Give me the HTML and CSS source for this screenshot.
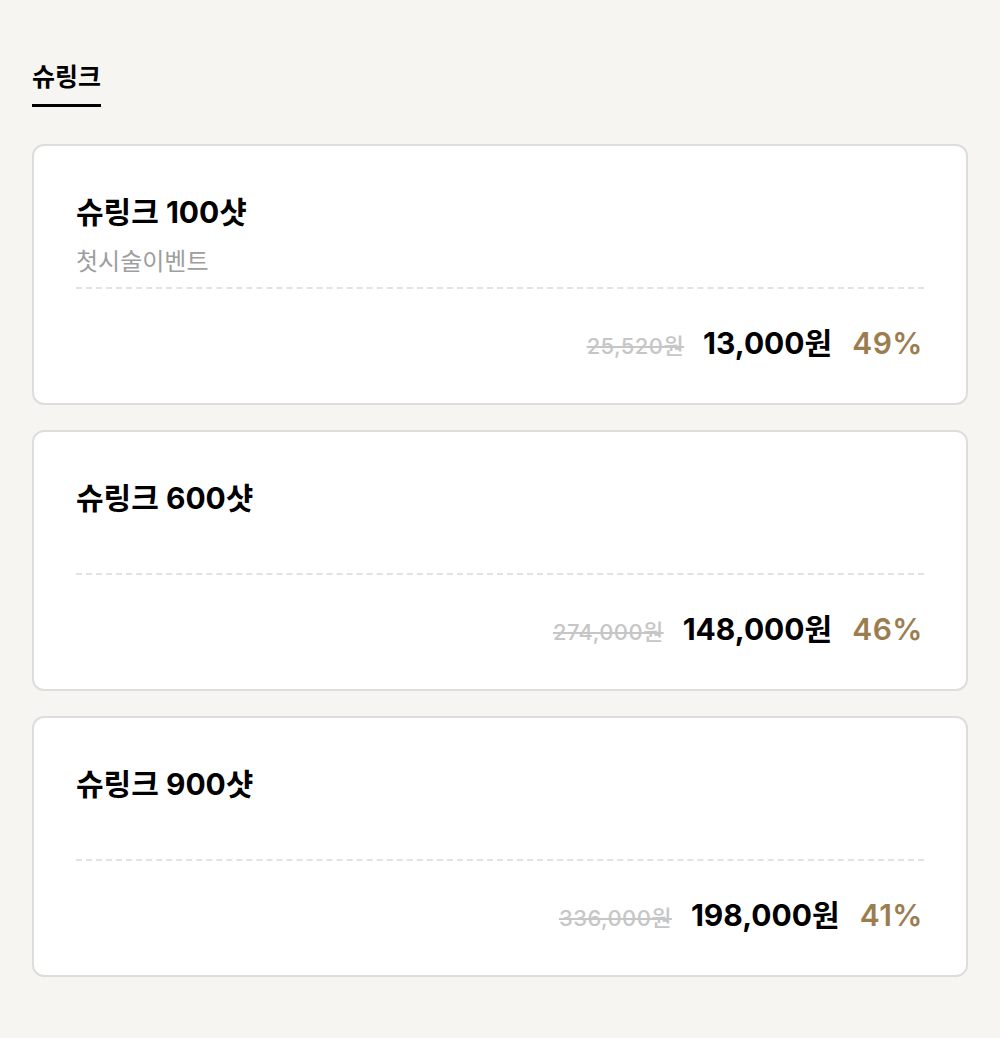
FILE: index.html
```html
<!DOCTYPE html>
<html lang="ko">
<head>
  <meta charset="UTF-8">
  <meta name="viewport" content="width=device-width, initial-scale=1.0">
  <title>슈링크</title>
  <link rel="stylesheet" href="styles.css">
</head>
<body>
  <div class="page">
    <div class="tabs">
      <span class="tab active">슈링크</span>
    </div>

    <div class="card-list">
      <div class="card">
        <h2 class="card-title">슈링크 100샷</h2>
        <p class="card-sub">첫시술이벤트</p>
        <div class="card-price">
          <span class="price-old">25,520원</span>
          <span class="price-now">13,000원</span>
          <span class="price-rate">49%</span>
        </div>
      </div>

      <div class="card">
        <h2 class="card-title">슈링크 600샷</h2>
        <p class="card-sub"></p>
        <div class="card-price">
          <span class="price-old">274,000원</span>
          <span class="price-now">148,000원</span>
          <span class="price-rate">46%</span>
        </div>
      </div>

      <div class="card">
        <h2 class="card-title">슈링크 900샷</h2>
        <p class="card-sub"></p>
        <div class="card-price">
          <span class="price-old">336,000원</span>
          <span class="price-now">198,000원</span>
          <span class="price-rate">41%</span>
        </div>
      </div>
    </div>
  </div>
</body>
</html>
```

FILE: styles.css
```css
/* General Styles */
body {
  margin: 0;
  padding: 0;
  background: #f6f5f1;
  font-family: Inter, "Noto Sans CJK KR", sans-serif;
  color: #000;
}

.page {
  padding: 60px 32px 60px;
}

/* Tabs */
.tabs {
  display: flex;
}

.tab {
  font-size: 25px;
  font-weight: 700;
  line-height: 34px;
  padding-bottom: 10px;
  border-bottom: 3px solid #000;
}

/* Cards */
.card-list {
  margin-top: 37px;
  display: flex;
  flex-direction: column;
  gap: 25px;
}

.card {
  background: #fff;
  border: 2px solid #dedddb;
  border-radius: 12px;
  padding: 47px 42px 0 42px;
  height: 261px;
  box-sizing: border-box;
}

.card-title {
  margin: 0;
  font-size: 30px;
  font-weight: 700;
  line-height: 38px;
}

.card-sub {
  margin: 15px 0 0;
  height: 32px;
  font-size: 24px;
  line-height: 32px;
  color: #9e9e9e;
  padding-bottom: 9px;
  border-bottom: 2px dashed #e2e2e2;
}

.card-price {
  display: flex;
  justify-content: flex-end;
  align-items: baseline;
  margin-top: 30px;
  padding-right: 1px;
}

.price-old {
  font-size: 22px;
  font-weight: 500;
  color: #c6c6c6;
  text-decoration: line-through;
  letter-spacing: 0.4px;
  margin-right: 19px;
}

.price-now {
  font-size: 30px;
  font-weight: 700;
  margin-right: 20px;
}

.price-rate {
  font-size: 30px;
  font-weight: 600;
  color: #9b7d50;
  letter-spacing: 0.5px;
}
```
